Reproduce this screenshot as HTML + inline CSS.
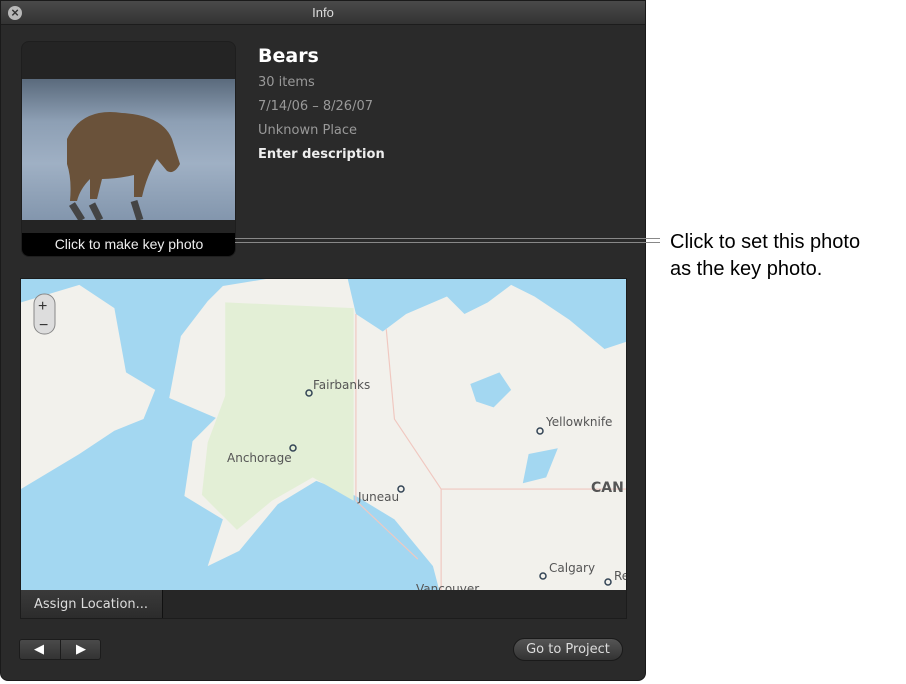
<!DOCTYPE html>
<html><head><meta charset="utf-8"><style>
*{margin:0;padding:0;box-sizing:border-box}
body{width:906px;height:684px;background:#fff;position:relative;overflow:hidden;font-family:"Liberation Sans","DejaVu Sans",sans-serif}
.win{position:absolute;left:0;top:0;width:646px;height:681px;background:#2a2a2a;border-radius:0 0 8px 8px;border:1px solid #1a1a1a}
.title{position:absolute;left:0;top:0;width:644px;height:24px;background:linear-gradient(#4a4a4a,#333);border-bottom:1px solid #1c1c1c;color:#ddd;font-size:13px;text-align:center;line-height:24px}
.close{position:absolute;left:7px;top:5px;width:14px;height:14px;border-radius:50%;background:#b8b8b8;color:#333;font-size:13px;line-height:14px;text-align:center;font-weight:bold}
.photo{position:absolute;left:20px;top:40px;width:215px;height:216px;background:#242424;border-radius:8px;overflow:hidden;border:1px solid #1e1e1e}
.pimg{position:absolute;left:0;top:37px;width:214px;height:141px;background:linear-gradient(#5a6a7c 0%,#8d9fb4 30%,#9fb0c4 60%,#8396ad 100%)}
.lbl{position:absolute;left:0;bottom:0;width:214px;height:23px;background:#000;color:#eee;font-size:14px;text-align:center;line-height:23px}
.t{position:absolute;left:257px;color:#999;font-size:13px;font-family:"DejaVu Sans",sans-serif}
.map{position:absolute;left:19px;top:277px;width:607px;height:341px;border:1px solid #1c1c1c;background:#262626}
.btn{position:absolute;color:#ddd;font-size:13px;font-family:"DejaVu Sans",sans-serif}
</style></head><body>
<div class="win">
<div class="title">Info</div>
<div class="close">×</div>
<div class="photo"><div class="pimg">
<svg width="214" height="141" viewBox="0 0 214 141"><path d="M45 60 Q60 28 100 34 Q140 36 150 60 L158 85 Q152 96 145 92 L135 80 Q125 96 120 118 L112 118 L112 96 Q95 100 80 100 L75 120 L68 120 L68 100 Q58 110 55 122 L48 122 Q50 100 45 85 Z" fill="#6a523a"/><path d="M50 125 L60 141 M70 125 L78 141 M112 122 L118 141" stroke="#444" stroke-width="7"/></svg>
</div><div class="lbl">Click to make key photo</div></div>
<div class="t" style="top:44px;color:#fff;font-size:19px;font-weight:bold">Bears</div>
<div class="t" style="top:74px">30 items</div>
<div class="t" style="top:98px">7/14/06 – 8/26/07</div>
<div class="t" style="top:122px">Unknown Place</div>
<div class="t" style="top:146px;color:#eee;font-weight:bold">Enter description</div>
<div class="map">
<svg width="605" height="311" style="position:absolute;left:0;top:0" viewBox="0 0 605 311">
<rect width="605" height="311" fill="#a3d7f1"/>
<g transform="scale(1.167)">
<path d="M0 20 L50 5 L80 25 L90 80 L115 95 L105 120 L80 130 L50 150 L0 180 Z" fill="#f2f1ec"/>
<path d="M173 6 L210 0 L280 0 L287 30 L310 45 L330 30 L365 15 L380 30 L400 20 L420 5 L440 15 L470 35 L500 60 L530 50 L560 30 L605 40 L605 311 L370 311 L353 246 L320 206 L287 186 L253 173 L220 193 L187 233 L160 246 L173 206 L140 186 L147 139 L167 119 L127 102 L137 49 L160 19 Z" fill="#f2f1ec"/>
<path d="M175 20 L285 25 L285 190 L250 170 L215 190 L185 215 L155 185 L160 140 L175 100 Z" fill="#e3efd6"/>
<path d="M385 90 L410 80 L420 95 L405 110 L390 105 Z M435 150 L460 145 L450 170 L430 175 Z" fill="#a3d7f1"/>
<path d="M287 30 L287 190 M287 190 L340 240 M313 43 L320 120 L360 180 L605 180 M360 180 L360 311" stroke="#f0c8c0" fill="none"/>
</g>
<g fill="none" stroke="#345" stroke-width="1.5"><circle cx="288" cy="114" r="3"/><circle cx="272" cy="169" r="3"/><circle cx="380" cy="210" r="3"/><circle cx="519" cy="152" r="3"/><circle cx="522" cy="297" r="3"/><circle cx="587" cy="303" r="3"/></g>
<g font-size="12" fill="#555" font-family="DejaVu Sans,sans-serif"><text x="292" y="110">Fairbanks</text><text x="206" y="183">Anchorage</text><text x="337" y="222">Juneau</text><text x="525" y="147">Yellowknife</text><text x="528" y="293">Calgary</text><text x="593" y="301">Re</text><text x="395" y="314">Vancouver</text><text x="570" y="213" font-weight="bold" font-size="14">CAN</text></g>
<rect x="13" y="15" width="21" height="40" rx="10" fill="#ddd" stroke="#888"/><text x="17" y="32" font-size="16" fill="#333">+</text><text x="18" y="51" font-size="16" fill="#333">−</text>
</svg>
<div style="position:absolute;left:0;top:311px;width:142px;height:28px;background:linear-gradient(#3a3a3a,#2c2c2c);border-right:1px solid #111"></div>
<div class="btn" style="left:13px;top:318px">Assign Location...</div>
</div>
<div style="position:absolute;left:18px;top:638px;width:82px;height:21px;background:linear-gradient(#4a4a4a,#333);border:1px solid #1c1c1c;border-radius:3px"><div style="position:absolute;left:40px;top:0;width:1px;height:19px;background:#1c1c1c"></div><span style="position:absolute;left:14px;top:1px;color:#fff;font-size:13px">◀</span><span style="position:absolute;left:56px;top:1px;color:#fff;font-size:13px">▶</span></div>
<div style="position:absolute;left:512px;top:637px;width:110px;height:23px;background:linear-gradient(#555,#333);border:1px solid #1a1a1a;border-radius:12px;color:#ddd;font-size:13px;text-align:center;line-height:21px;font-family:'DejaVu Sans',sans-serif">Go to Project</div>
</div>
<div style="position:absolute;left:235px;top:238px;width:425px;height:5px;border-top:1px solid #888;border-bottom:1px solid #888"></div>
<div style="position:absolute;left:670px;top:229px;font-size:20px;color:#000;line-height:27px">Click to set this photo<br>as the key photo.</div>
</body></html>
